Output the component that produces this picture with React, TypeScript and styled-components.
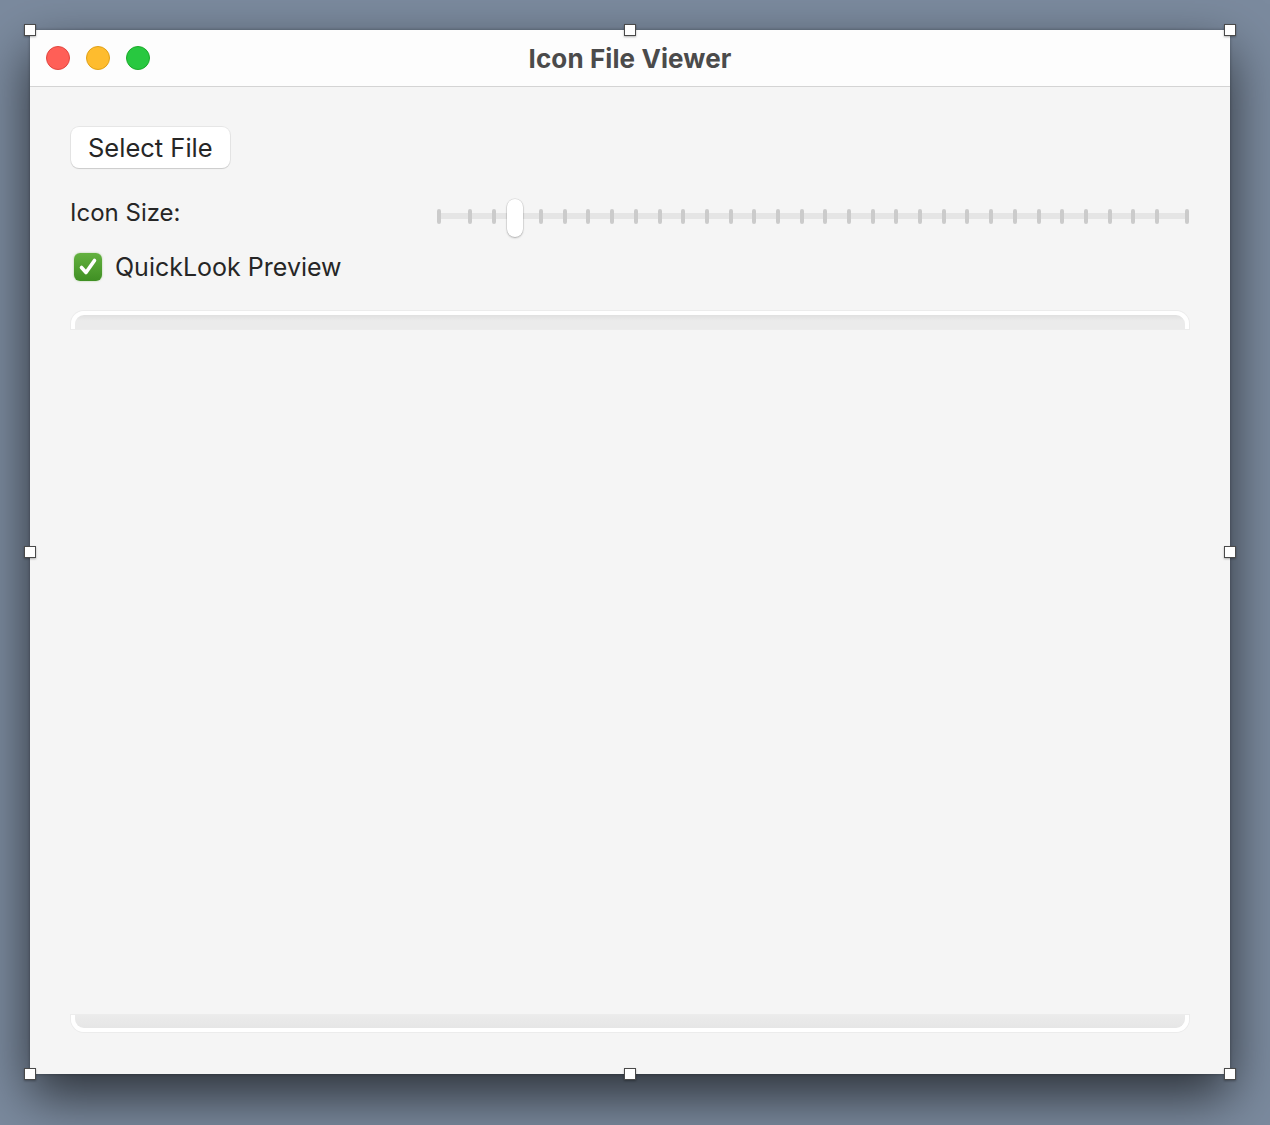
import React from 'react';
import styled, { createGlobalStyle } from 'styled-components';

const GlobalStyle = createGlobalStyle`
  html, body {
    margin: 0;
    padding: 0;
    background: #7b8a9e;
    font-family: Inter, "Noto Sans", "Liberation Sans", sans-serif;
  }
`

const Desktop = styled.div`
  padding: 30px 40px 51px 30px;
  height: 1125px;
  box-sizing: border-box;
  background: #7b8a9e;
`

const Window = styled.div`
  position: relative;
  width: 1200px;
  height: 1044px;
  background: #f5f5f5;
  display: flex;
  flex-direction: column;
  box-shadow: 0 22px 50px rgba(0, 0, 0, 0.65), 0 0 3px rgba(0, 0, 0, 0.3);
`

const TitleBar = styled.div`
  position: relative;
  height: 56px;
  flex: none;
  background: #fdfdfd;
  border-bottom: 1px solid #d4d4d4;
  display: flex;
  align-items: center;
  justify-content: center;
`

const Lights = styled.div`
  position: absolute;
  left: 16px;
  top: 16px;
  display: flex;
  gap: 16px;
`

const Light = styled.span<{ $fill: string; $edge: string }>`
  width: 24px;
  height: 24px;
  border-radius: 50%;
  box-sizing: border-box;
  background: ${p => p.$fill};
  border: 1px solid ${p => p.$edge};
`

const Title = styled.div`
  font-size: 26px;
  font-weight: 700;
  color: #4b4b4b;
  letter-spacing: 0.1px;
`

const Content = styled.div`
  flex: 1;
  display: flex;
  flex-direction: column;
  padding: 40px 41px 42px 41px;
  min-height: 0;
`

const Button = styled.button`
  align-self: flex-start;
  height: 41px;
  padding: 0 17px;
  background: #ffffff;
  border: none;
  border-radius: 8px;
  box-shadow: 0 0 0 1px rgba(0, 0, 0, 0.06), 0 1px 1px rgba(0, 0, 0, 0.12);
  font-family: inherit;
  font-size: 25.5px;
  color: #262626;
  cursor: pointer;
`

const SizeRow = styled.div`
  margin-top: 27px;
  height: 42px;
  display: flex;
  align-items: center;
`

const Label = styled.span`
  flex: 1;
  margin-left: -1px;
  margin-bottom: 8px;
  font-size: 24px;
  color: #262626;
`

const Slider = styled.div`
  position: relative;
  width: 752px;
  height: 42px;
  display: flex;
  align-items: center;
`

const Track = styled.div`
  position: absolute;
  left: 0;
  right: 0;
  top: 18px;
  height: 6px;
  border-radius: 3px;
  background: #e5e5e5;
`

const Ticks = styled.div`
  position: relative;
  width: 100%;
  display: flex;
  justify-content: space-between;
  align-items: center;
`

const InnerTicks = styled.div`
  flex: 1;
  margin: 0 26px 0 27px;
  display: flex;
  justify-content: space-between;
`

const Tick = styled.span`
  width: 4px;
  height: 15px;
  border-radius: 2px;
  background: #cbcbcb;
`

const Thumb = styled.span`
  position: absolute;
  left: 70px;
  top: 4px;
  width: 16px;
  height: 38px;
  border-radius: 8px;
  background: #ffffff;
  box-shadow: 0 0 0 0.5px rgba(0, 0, 0, 0.12), 0 1px 2px rgba(0, 0, 0, 0.25);
`

const CheckRow = styled.label`
  margin-top: 16px;
  height: 28px;
  display: flex;
  align-items: center;
  gap: 13px;
  padding-left: 3px;
  font-size: 25px;
  color: #262626;
`

const CheckBox = styled.span`
  width: 28px;
  height: 28px;
  border-radius: 6px;
  background: linear-gradient(#63b13f, #3f8f23);
  box-shadow: 0 0 2px rgba(80, 160, 40, 0.5);
  display: flex;
  align-items: center;
  justify-content: center;
`

const Frame = styled.div`
  margin-top: 30px;
  flex: 1;
  display: flex;
  flex-direction: column;
  justify-content: space-between;
`

const Cap = styled.div<{ $bottom?: boolean }>`
  height: ${p => p.$bottom ? '13px' : '14px'};
  border: 4px solid #ffffff;
  ${p => p.$bottom ? 'border-top: none;' : 'border-bottom: none;'}
  border-radius: ${p => p.$bottom ? '0 0 13px 13px' : '13px 13px 0 0'};
  background: ${p => p.$bottom
    ? 'linear-gradient(#ebebeb, #e6e6e6)'
    : 'linear-gradient(#e0e0e0, #ebebeb 40%)'};
  box-shadow: 0 0 0 1px #ececec;
`

const Handle = styled.span<{ $x: string; $y: string }>`
  position: absolute;
  left: ${p => p.$x};
  top: ${p => p.$y};
  width: 12px;
  height: 12px;
  margin: -6px 0 0 -6px;
  box-sizing: border-box;
  background: #ffffff;
  border: 1px solid #4a4a4a;
  box-shadow: 0 1px 2px rgba(0, 0, 0, 0.3);
`

const handles = [
  ['0%', '0%'], ['50%', '0%'], ['100%', '0%'],
  ['0%', '50%'], ['100%', '50%'],
  ['0%', '100%'], ['50%', '100%'], ['100%', '100%'],
]

function App() {
  const [checked, setChecked] = React.useState(true)
  return (
    <>
      <GlobalStyle />
      <Desktop>
        <Window>
          <TitleBar>
            <Lights>
              <Light $fill="#ff5f57" $edge="#e2463f" />
              <Light $fill="#febc2e" $edge="#e1a116" />
              <Light $fill="#28c840" $edge="#1aab29" />
            </Lights>
            <Title>Icon File Viewer</Title>
          </TitleBar>
          <Content>
            <Button>Select File</Button>
            <SizeRow>
              <Label>Icon Size:</Label>
              <Slider>
                <Track />
                <Ticks>
                  <Tick />
                  <InnerTicks>
                    {Array.from({ length: 30 }).map((_, i) => <Tick key={i} />)}
                  </InnerTicks>
                  <Tick />
                </Ticks>
                <Thumb />
              </Slider>
            </SizeRow>
            <CheckRow onClick={() => setChecked(!checked)}>
              <CheckBox>
                {checked && (
                  <svg width="22" height="22" viewBox="0 0 22 22">
                    <path d="M4.5 11.5 L9 16.5 L17.5 4.5" fill="none" stroke="#fff" strokeWidth="3.6" strokeLinecap="round" strokeLinejoin="round" />
                  </svg>
                )}
              </CheckBox>
              QuickLook Preview
            </CheckRow>
            <Frame>
              <Cap />
              <Cap $bottom />
            </Frame>
          </Content>
          {handles.map(([x, y], i) => <Handle key={i} $x={x} $y={y} />)}
        </Window>
      </Desktop>
    </>
  )
}

export default App;
